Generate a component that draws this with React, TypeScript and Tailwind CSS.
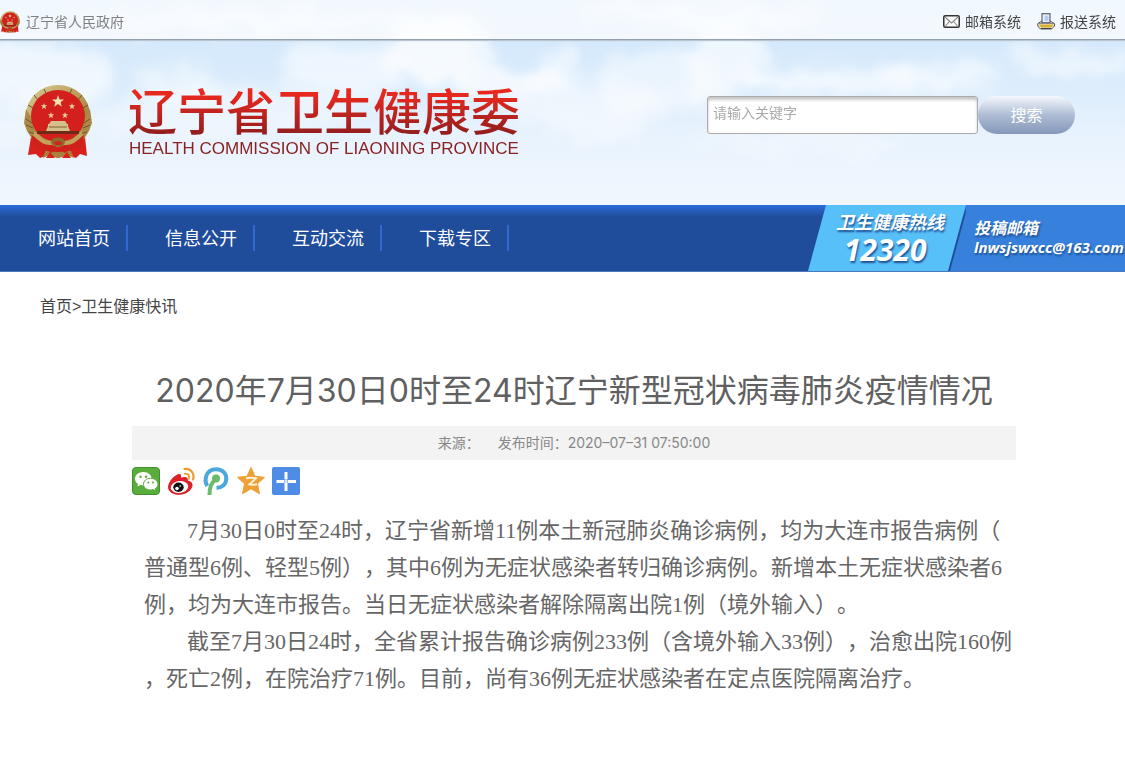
import type { ReactNode } from "react";

const navItems = ["网站首页", "信息公开", "互动交流", "下载专区"];

const Emblem = ({ className }: { className: string }) => (
  <svg viewBox="0 0 68 74" className={className} aria-hidden="true">
    <defs>
      <linearGradient id="gold" x1="0" y1="0" x2="1" y2="1">
        <stop offset="0" stopColor="#d9cf9a" />
        <stop offset="0.5" stopColor="#b99b55" />
        <stop offset="1" stopColor="#8d6a2c" />
      </linearGradient>
    </defs>
    <path d="M7 52 L4 70 L12 69 L16 73 L24 70 L34 73 L44 70 L52 73 L56 69 L63 71 L61 52 Z" fill="#d8211c" />
    <path d="M19 73 L22 64 L27 68 L34 63 L41 68 L46 64 L50 73 L43 70 L34 73 L25 70 Z" fill="#a8803c" />
    <path d="M22 73 L26 67 L31 73 Z M38 73 L43 67 L47 73 Z" fill="#d8211c" />
    <ellipse cx="34" cy="30" rx="32" ry="30" fill="url(#gold)" />
    <path d="M2 24 L0 38 L3 46 L8 54 L16 60 L12 40 Z M66 24 L68 38 L65 46 L60 54 L52 60 L56 40 Z" fill="#ab8a48" />
    <path d="M2 34 l6 4 M2 40 l7 3 M5 47 l7 2 M66 34 l-6 4 M66 40 l-7 3 M63 47 l-7 2 M4 20 l5 3 M64 20 l-5 3 M10 10 l4 5 M58 10 l-4 5 M20 4 l2 4 M48 4 l-2 4" stroke="#6f5529" strokeWidth="1" fill="none" />
    <ellipse cx="34" cy="31" rx="27" ry="26" fill="#d3201d" />
    <path d="M7.500 50 Q34 70 60 50 L58 62 Q34 72 10 62 Z" fill="#cf211b" />
    <path d="M11 46 Q18 56 28 56 Q34 50 40 56 Q50 56 57 46 L59 50 Q50 61 40 60 L34 62 L28 60 Q18 61 9 50 Z" fill="#c5a25c" />
    <ellipse cx="34" cy="57" rx="7" ry="4.500" fill="#8d6a2c" />
    <ellipse cx="34" cy="58" rx="4" ry="2" fill="#c9291e" />
    <path d="M13 46 h42 v3 h-42 Z" fill="#6d2a16" />
    <path d="M22 46 l2 -5 h20 l2 5 Z M25 39 h18 l-2 -3 h-14 Z M24 41 h20 v-2 h-20 Z" fill="#d4c08a" />
    <path d="M25 42 h18" stroke="#8a5a2e" strokeWidth="1" />
    <path d="M34 10 l1.500 4.500 4.500 0 -3.500 2.800 1.300 4.500 -3.800 -2.700 -3.800 2.700 1.300 -4.500 -3.500 -2.800 4.500 0 Z" fill="#efe3b0" />
    <path d="M20 18 l.8 2.300 2.400 0 -1.900 1.500 .7 2.400 -2 -1.400 -2 1.400 .7 -2.400 -1.900 -1.500 2.400 0 Z M48 18 l.8 2.300 2.400 0 -1.900 1.500 .7 2.400 -2 -1.400 -2 1.400 .7 -2.400 -1.900 -1.500 2.400 0 Z M27 27 l.8 2.300 2.400 0 -1.900 1.500 .7 2.400 -2 -1.400 -2 1.400 .7 -2.400 -1.900 -1.500 2.400 0 Z M41 27 l.8 2.300 2.400 0 -1.900 1.500 .7 2.400 -2 -1.400 -2 1.400 .7 -2.400 -1.900 -1.500 2.400 0 Z" fill="#e0cf94" />
  </svg>
);

const MailIcon = () => (
  <svg viewBox="0 0 17 13" className="h-[13px] w-[17px]" fill="none" aria-hidden="true">
    <rect x="0.750" y="0.750" width="15.500" height="11.500" rx="1.500" fill="#fafafa" stroke="#333" strokeWidth="1.500" />
    <path d="M2 2 l6.500 6 L15 2 M2 11.500 l4.500 -5 M15 11.500 l-4.500 -5" stroke="#888" strokeWidth="1.100" />
  </svg>
);

const PrinterIcon = () => (
  <svg viewBox="0 0 18 17" className="h-[17px] w-[18px]" fill="none" aria-hidden="true">
    <path d="M5 8 L0.800 10.500 V13 L3.500 16 H14.500 L17.500 13 V10.500 L13 8" fill="#e8e8e8" stroke="#555" strokeWidth="1" />
    <rect x="5" y="0.700" width="8" height="9" fill="#eef4fc" stroke="#5a6270" strokeWidth="1.200" />
    <path d="M7.500 2.500 h4 v5.500 h-4 Z" fill="#b5cdec" />
    <path d="M1.500 10.500 h15.500" stroke="#888" strokeWidth="1" />
    <path d="M1.800 11.500 h15 L14.500 14.500 H4 Z" fill="#ddb02a" />
    <path d="M4 15.500 h10.500" stroke="#444" strokeWidth="1" />
  </svg>
);

const Sky = () => (
  <svg
    viewBox="0 0 1125 205"
    preserveAspectRatio="none"
    className="absolute inset-0 h-full w-full"
    aria-hidden="true"
  >
    <defs>
      <linearGradient id="sky" x1="0" y1="0" x2="0" y2="1">
        <stop offset="0" stopColor="#cfe6fc" />
        <stop offset="0.350" stopColor="#d9ebfc" />
        <stop offset="0.700" stopColor="#e9f3fd" />
        <stop offset="1" stopColor="#f1f7fe" />
      </linearGradient>
      <filter id="soft" x="-5%" y="-30%" width="110%" height="160%">
        <feGaussianBlur stdDeviation="7" result="blurred" />
        <feTurbulence type="fractalNoise" baseFrequency="0.025" numOctaves="3" seed="4" result="noise" />
        <feDisplacementMap in="blurred" in2="noise" scale="36" xChannelSelector="R" yChannelSelector="G" />
        <feGaussianBlur stdDeviation="2" />
      </filter>
    </defs>
    <rect width="1125" height="205" fill="url(#sky)" />
    <g fill="#fff" filter="url(#soft)">
      <ellipse cx="35" cy="75" rx="75" ry="34" opacity="0.600" />
      <ellipse cx="40" cy="125" rx="90" ry="22" opacity="0.300" />
      <ellipse cx="180" cy="85" rx="38" ry="18" opacity="0.450" />
      <ellipse cx="230" cy="110" rx="120" ry="24" opacity="0.350" />
      <ellipse cx="250" cy="20" rx="180" ry="12" opacity="0.500" />
      <ellipse cx="345" cy="68" rx="66" ry="27" opacity="0.550" />
      <ellipse cx="440" cy="50" rx="50" ry="36" opacity="0.750" />
      <ellipse cx="510" cy="84" rx="60" ry="12" opacity="0.700" />
      <ellipse cx="555" cy="70" rx="32" ry="17" opacity="0.600" />
      <ellipse cx="590" cy="110" rx="80" ry="26" opacity="0.450" />
      <ellipse cx="655" cy="80" rx="60" ry="28" opacity="0.450" />
      <ellipse cx="725" cy="60" rx="42" ry="38" opacity="0.600" />
      <ellipse cx="700" cy="15" rx="120" ry="14" opacity="0.500" />
      <ellipse cx="830" cy="82" rx="90" ry="14" opacity="0.600" />
      <ellipse cx="940" cy="74" rx="60" ry="16" opacity="0.550" />
      <ellipse cx="1075" cy="60" rx="65" ry="13" opacity="0.500" />
      <ellipse cx="800" cy="140" rx="110" ry="18" opacity="0.250" />
    </g>
  </svg>
);

const WechatIcon = () => (
  <svg viewBox="0 0 28 28" className="size-7" aria-hidden="true">
    <rect x="0.500" y="0.500" width="27" height="27" rx="3.500" fill="#5aac3d" stroke="#3f8f2b" />
    <path d="M11.500 5 C6.500 5 3 8 3 11.800 C3 14 4.200 15.800 6 17 L5.300 19.500 L8.400 18 C9.400 18.300 10.400 18.400 11.400 18.400 C16 18.400 19.700 15.500 19.700 11.800 C19.700 8 16.200 5 11.500 5 Z" fill="#fff" />
    <path d="M18.500 11.300 C14.300 11.300 11.500 14 11.500 17.200 C11.500 20.400 14.500 23 18.500 23 C19.500 23 20.300 22.900 21.100 22.600 L23.700 24 L23.100 21.800 C24.900 20.600 26 19 26 17.200 C26 14 22.700 11.300 18.500 11.300 Z" fill="#fff" stroke="#5aac3d" strokeWidth="1" />
    <g fill="#5aac3d">
      <circle cx="8.500" cy="9.700" r="1.200" />
      <circle cx="14" cy="9.700" r="1.200" />
      <circle cx="16.300" cy="15.400" r="1" />
      <circle cx="21" cy="15.400" r="1" />
    </g>
  </svg>
);

const WeiboIcon = () => (
  <svg viewBox="0 0 28 28" className="size-7" aria-hidden="true">
    <path d="M10.500 7.500 C13 6.300 14.800 7.500 14 10.800 C17.500 9.300 21.500 9.800 20.800 13.500 C25 14.500 26.500 17 25 20.500 C23 25 17.500 27.800 12 27.800 C6 27.800 1 24.800 1 20 C1 16 5.500 9.500 10.500 7.500 Z" fill="#df2029" />
    <ellipse cx="12.500" cy="20" rx="8.800" ry="6" transform="rotate(-8 12.500 20)" fill="#fff" />
    <ellipse cx="11.500" cy="20.300" rx="5.200" ry="4.700" fill="#111" />
    <circle cx="10" cy="21.500" r="1.800" fill="#fff" />
    <circle cx="13.200" cy="19" r="0.800" fill="#fff" />
    <path d="M18 6.800 C21 6.300 22.800 8.800 21.800 11.700" fill="none" stroke="#eb9b2f" strokeWidth="2" strokeLinecap="round" />
    <path d="M17.500 2 C23.500 1 28 6.500 26 12.500" fill="none" stroke="#eb9b2f" strokeWidth="2.200" strokeLinecap="round" />
  </svg>
);

const PengyouIcon = () => (
  <svg viewBox="0 0 28 28" className="size-7" aria-hidden="true">
    <path d="M5.200 19 C1.500 12 4.500 2.300 14 2.300 C21 2.300 24.300 7 24.300 11.500 C24.300 17.500 19.500 20.800 14.500 20.800" fill="none" stroke="#4ba8dc" strokeWidth="4" />
    <path d="M7.500 28 C7.500 20 9 16 14 12" fill="none" stroke="#6cba6b" strokeWidth="4" />
    <circle cx="14" cy="11.500" r="4" fill="#6cba6b" />
  </svg>
);

const QzoneIcon = () => (
  <svg viewBox="0 0 28 28" className="size-7" aria-hidden="true">
    <path d="M14 0.500 L18 9.300 L27.500 10.300 L20.500 16.800 L22.500 26.700 L14 21.800 L5.500 26.700 L7.500 16.800 L0.500 10.300 L10 9.300 Z" fill="#eda035" stroke="#eda035" strokeLinejoin="round" />
    <path d="M9 11.300 Q14 10 19 11.300 L12.500 17.300 Q16 18.300 20 17.300" fill="none" stroke="#fdf0d4" strokeWidth="2" />
  </svg>
);

const MoreIcon = () => (
  <svg viewBox="0 0 28 28" className="size-7" aria-hidden="true">
    <rect width="28" height="28" rx="2" fill="#4f8ce6" />
    <path d="M14 5 V12.500 M14 16 V24 M4.500 14.500 H12 M16 14.500 H24" stroke="#fff" strokeWidth="3" />
    <path d="M12.500 13 h3 v3 h-3 Z" fill="#dbe8fb" />
  </svg>
);

const shares: { name: string; icon: ReactNode }[] = [
  { name: "微信", icon: <WechatIcon /> },
  { name: "新浪微博", icon: <WeiboIcon /> },
  { name: "腾讯朋友", icon: <PengyouIcon /> },
  { name: "QQ空间", icon: <QzoneIcon /> },
  { name: "更多", icon: <MoreIcon /> },
];

const App = () => {
  return (
    <div className="min-h-screen bg-white font-['Liberation_Sans','Noto_Sans_CJK_SC',sans-serif] text-[#444] [text-spacing-trim:space-all]">
      <header className="relative">
        <Sky />
        <div className="relative flex h-10 items-center justify-between border-b border-[#93a1ae] bg-white/70 pt-1 pr-[9px] text-sm shadow-[0_1px_1px_#b9c6d2]">
          <a href="#gov" className="flex items-center gap-[6px] text-[#808080]">
            <Emblem className="h-[22px] w-5" />
            辽宁省人民政府
          </a>
          <div className="flex gap-4 text-[#444]">
            <a href="#mail" className="flex items-center gap-[5px]">
              <MailIcon />
              邮箱系统
            </a>
            <a href="#report" className="flex items-center gap-[5px]">
              <PrinterIcon />
              报送系统
            </a>
          </div>
        </div>

        <div className="relative flex h-[165px] items-start justify-between pt-[45px] pr-[50px] pl-6">
          <div className="flex gap-9">
            <Emblem className="h-[74px] w-[68px]" />
            <h1>
              <span className="block bg-linear-to-b from-[#e6281f] from-20% to-[#8a1c1c] to-95% bg-clip-text text-[49px] leading-[56px] font-medium text-transparent">
                辽宁省卫生健康委
              </span>
              <span className="block pl-px text-[17px] leading-4 text-[#8a2222]">
                HEALTH COMMISSION OF LIAONING PROVINCE
              </span>
            </h1>
          </div>
          <form className="mt-[11px] flex" onSubmit={(e) => e.preventDefault()}>
            <input
              type="text"
              aria-label="关键字"
              placeholder="请输入关键字"
              className="h-[38px] w-[271px] rounded-[3px] border border-[#aaa] bg-white px-[5px] pb-[5px] text-sm shadow-[inset_0_3px_3px_#c8c8c8] placeholder:text-[#aaa]"
            />
            <button
              type="submit"
              className="h-[38px] w-[97px] rounded-full bg-linear-to-b from-[#f6f9fd] via-[#aebdd4] to-[#8598ba] pt-px text-white"
            >
              搜索
            </button>
          </form>
        </div>
      </header>

      <nav className="flex h-[67px] justify-between border-b border-[#4a78bd] bg-linear-to-b from-[#2d6cdb] to-[#204d9b] to-18%">
        <ul className="flex pt-5 pl-px">
          {navItems.map((item) => (
            <li key={item} className="h-[26px] w-[127px] border-r-2 border-[#3168d2] pl-[37px] text-lg leading-7 text-white">
              <a href="#nav">{item}</a>
            </li>
          ))}
        </ul>
        <div className="flex bg-linear-to-r from-transparent from-50% to-[#3781dc] to-50% font-['Open_Sans','Noto_Sans_CJK_SC',sans-serif] font-bold text-white italic text-shadow-[1px_2px_2px_#1d4f93]">
          <div className="w-[158px] bg-[#58c0f9] pt-[7px] pl-[28px] [clip-path:polygon(18px_0,100%_0,140px_100%,0_100%)]">
            <p className="text-lg leading-5">卫生健康热线</p>
            <p className="pl-2 text-[30px] leading-9">12320</p>
          </div>
          <div className="-ml-[18px] w-[177px] bg-[#3781dc] pt-[13px] pl-[26px] whitespace-nowrap [clip-path:polygon(20px_0,100%_0,100%_100%,2px_100%)]">
            <p className="text-base leading-5">投稿邮箱</p>
            <p className="text-[15px] leading-[18px]">lnwsjswxcc@163.com</p>
          </div>
        </div>
      </nav>

      <main>
        <div className="px-10 pt-[23px] leading-6">
          <a href="#home">首页</a>&gt;<a href="#news">卫生健康快讯</a>
        </div>

        <article className="mt-12 mr-[109px] ml-[132px] text-[#666]">
          <h2 className="text-center font-['Inter','Noto_Sans_CJK_SC',sans-serif] text-[32px] leading-12 font-normal whitespace-nowrap text-[#606060]">
            2020年7月30日0时至24时辽宁新型冠状病毒肺炎疫情情况
          </h2>
          <div className="mt-[11px] flex h-[34px] items-center justify-center gap-[18px] bg-[#f3f3f3] font-['Inter','Noto_Sans_CJK_SC',sans-serif] text-sm text-[#888]">
            <span>来源：</span>
            <span>发布时间：2020–07–31 07:50:00</span>
          </div>
          <div className="mt-[7px] flex gap-[7px]">
            {shares.map((share) => (
              <button key={share.name} type="button" aria-label={share.name}>
                {share.icon}
              </button>
            ))}
          </div>
          <div className="mt-[17px] px-3 font-['Liberation_Serif','Noto_Sans_CJK_SC',serif] text-[22px] leading-[37px] whitespace-nowrap">
            <p className="indent-[43px]">
              7月30日0时至24时，辽宁省新增11例本土新冠肺炎确诊病例，均为大连市报告病例（
            </p>
            <p>普通型6例、轻型5例），其中6例为无症状感染者转归确诊病例。新增本土无症状感染者6</p>
            <p>例，均为大连市报告。当日无症状感染者解除隔离出院1例（境外输入）。</p>
            <p className="indent-[43px]">
              截至7月30日24时，全省累计报告确诊病例233例（含境外输入33例），治愈出院160例
            </p>
            <p>，死亡2例，在院治疗71例。目前，尚有36例无症状感染者在定点医院隔离治疗。</p>
          </div>
        </article>
      </main>
    </div>
  );
};

export default App;
